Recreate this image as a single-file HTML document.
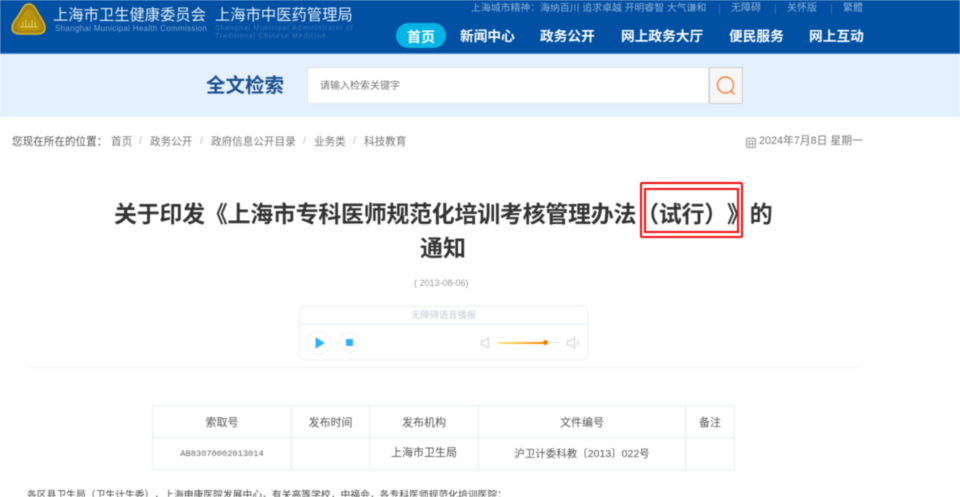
<!DOCTYPE html>
<html lang="zh">
<head>
<meta charset="utf-8">
<style>
html,body{margin:0;padding:0;background:#fff}
body{width:960px;height:497px;overflow:hidden;position:relative;font-family:"Liberation Sans","Noto Sans CJK SC",sans-serif;text-spacing-trim:space-all}
.a{position:absolute;white-space:nowrap;line-height:1}
#wrap{position:absolute;left:0;top:0;width:960px;height:497px;overflow:hidden;filter:blur(.5px)}
.nav{top:30px;font-size:14px;font-weight:700;color:#fff}
.top{top:4px;font-size:10px;color:#8fb2d8}
.bc{top:137px;font-size:10.6px;color:#777}
.sl{top:137px;font-size:10px;color:#bbb}
td{border:1px solid #e8ecf0;text-align:center;font-size:11px;color:#555;padding:0}
table{border-collapse:collapse;position:absolute;left:152px;top:405px;width:582px;height:65px;table-layout:fixed}
</style>
</head>
<body>
<div id="wrap">
<div class="a" style="left:0;top:0;width:960px;height:53px;background:#0050a3;border-bottom:1px solid #4d86c4"></div>
<svg class="a" style="left:11px;top:2px" width="36" height="33" viewBox="0 0 36 33">
<path d="M18 2C22 2 24 5 27 11C30 16 34 21 34 26C34 31 30 32 26 32H10C6 32 1 31 1 26C1 21 6 16 9 11C12 5 14 2 18 2Z" fill="#a88312" stroke="#d8bb28" stroke-width="1.5"/>
<path d="M18 7C21 7 22 10 24 13C26 17 30 21 30 25C30 28 26 29 24 29H12C10 29 6 28 6 25C6 21 10 17 12 13C14 10 15 7 18 7Z" fill="#b8940f"/>
<path d="M9 25H27M12 25V20M15 25V18M18 25V21M21 25V18M24 25V20" stroke="#e0cf60" stroke-width="1" fill="none"/>
</svg>
<div class="a" style="left:53px;top:8px;font-size:15.3px;color:#e6eef8">上海市卫生健康委员会</div>
<div class="a" style="left:55px;top:25px;font-size:8px;color:#7ea5d2;letter-spacing:.3px">Shanghai Municipal Health Commission</div>
<div class="a" style="left:215px;top:8px;font-size:15.3px;color:#e6eef8">上海市中医药管理局</div>
<div class="a" style="left:215px;top:25px;font-size:7px;color:#3f78b8;line-height:8px;letter-spacing:.76px;white-space:normal;width:160px">Shanghai Municipal Administrator of<br>Traditional Chinese Medicine</div>

<div class="a top" style="left:471px;font-size:9.9px">上海城市精神：海纳百川 追求卓越 开明睿智 大气谦和</div>
<div class="a" style="left:719px;top:4px;width:1px;height:10px;background:#3a72b3"></div>
<div class="a top" style="left:731px">无障碍</div>
<div class="a" style="left:775px;top:4px;width:1px;height:10px;background:#3a72b3"></div>
<div class="a top" style="left:787px">关怀版</div>
<div class="a" style="left:831px;top:4px;width:1px;height:10px;background:#3a72b3"></div>
<div class="a top" style="left:843px">繁體</div>

<div class="a" style="left:396px;top:23px;width:50px;height:25px;border-radius:13px;background:#05b4e6"></div>
<div class="a nav" style="left:407px">首页</div>
<div class="a nav" style="left:460px;font-size:13.7px">新闻中心</div>
<div class="a nav" style="left:540px;font-size:13.7px">政务公开</div>
<div class="a nav" style="left:621px;font-size:13.7px">网上政务大厅</div>
<div class="a nav" style="left:729px;font-size:13.7px">便民服务</div>
<div class="a nav" style="left:809px;font-size:13.7px">网上互动</div>

<div class="a" style="left:0;top:54px;width:960px;height:63px;background:#e4f1fc"></div>
<div class="a" style="left:206px;top:77px;font-size:19.5px;font-weight:700;color:#1b4f92">全文检索</div>
<div class="a" style="left:307px;top:67px;width:402px;height:37px;background:#fff;border:1px solid #d6e6f6;box-sizing:border-box"></div>
<div class="a" style="left:320px;top:82px;font-size:10px;color:#777">请输入检索关键字</div>
<div class="a" style="left:709px;top:67px;width:34px;height:37px;background:#f6f6f6;border:1px solid #ccc;box-sizing:border-box"></div>
<svg class="a" style="left:714px;top:74px" width="24" height="24" viewBox="0 0 24 24"><circle cx="11.5" cy="11" r="8" fill="none" stroke="#f57f3e" stroke-width="1.4"/><path d="M17 17L20.5 20.5" stroke="#f57f3e" stroke-width="1.5" fill="none"/></svg>

<div class="a bc" style="left:12px;color:#555">您现在所在的位置：</div>
<div class="a bc" style="left:111px">首页</div>
<div class="a sl" style="left:139px">/</div>
<div class="a bc" style="left:150px">政务公开</div>
<div class="a sl" style="left:200px">/</div>
<div class="a bc" style="left:211px">政府信息公开目录</div>
<div class="a sl" style="left:303px">/</div>
<div class="a bc" style="left:314px">业务类</div>
<div class="a sl" style="left:353px">/</div>
<div class="a bc" style="left:364px">科技教育</div>

<svg class="a" style="left:746px;top:137px" width="10" height="11" viewBox="0 0 10 11"><rect x=".5" y="1.5" width="9" height="9" rx="1" fill="none" stroke="#999"/><path d="M0 4H10M3.5 4V10M6.5 4V10M0 7H10M3 0V2M7 0V2" stroke="#999" stroke-width=".8"/></svg>
<div class="a" style="left:759px;top:136px;font-size:10.8px;color:#777">2024年7月8日 星期一</div>

<div class="a" style="left:114px;top:203px;font-size:23px;font-weight:700;color:#333;letter-spacing:-.3px;text-spacing-trim:space-all">关于印发《上海市专科医师规范化培训考核管理办法（试行）》的</div>
<div class="a" style="left:420px;top:237px;font-size:23px;font-weight:700;color:#333">通知</div>
<div class="a" style="left:640px;top:182px;width:103px;height:56px;border:2px solid #f40c0c;border-radius:2px;box-sizing:border-box"></div>
<div class="a" style="left:644px;top:188px;width:95px;height:45px;border:2px solid #f40c0c;box-sizing:border-box"></div>

<div class="a" style="left:414px;top:279px;font-size:9px;color:#999">( 2013-08-06)</div>

<div class="a" style="left:299px;top:306px;width:289px;height:54px;border:1px solid #eef1f5;border-radius:6px;box-sizing:border-box;box-shadow:0 0 2px #f0f2f6"></div>
<div class="a" style="left:299px;top:324px;width:289px;height:1px;background:#e2ecf6"></div>
<div class="a" style="left:411px;top:311px;font-size:9.3px;color:#c8cbd8">无障碍语音播报</div>
<div class="a" style="left:307px;top:331px;width:24px;height:24px;border:1px solid #edf0f5;border-radius:50%;box-sizing:border-box"></div>
<div class="a" style="left:339px;top:332px;width:21px;height:21px;border:1px solid #edf0f5;border-radius:50%;box-sizing:border-box"></div>
<svg class="a" style="left:315px;top:337px" width="10" height="12"><path d="M1 1L9 6L1 11Z" fill="#2db3fb" stroke="#2db3fb" stroke-linejoin="round"/></svg>
<div class="a" style="left:346px;top:339px;width:7px;height:7px;background:#2db3fb;border-radius:1px"></div>
<svg class="a" style="left:481px;top:337px" width="9" height="12"><path d="M.5 4H3L7.5 1V11L3 8H.5Z" fill="none" stroke="#ccd0d6"/></svg>
<div class="a" style="left:498px;top:342px;width:62px;height:1px;background:#e2e4e8"></div>
<div class="a" style="left:498px;top:342px;width:47px;height:1.5px;background:linear-gradient(90deg,#ffe27a,#ff8a00)"></div>
<div class="a" style="left:543px;top:340px;width:5px;height:5px;border-radius:50%;background:#f57c00"></div>
<svg class="a" style="left:567px;top:337px" width="13" height="12"><path d="M.5 4H3L7.5 1V11L3 8H.5Z" fill="none" stroke="#ccd0d6"/><path d="M9.5 4Q11 6 9.5 8M11 3Q13 6 11 9" fill="none" stroke="#dde0e4"/></svg>
<div class="a" style="left:28px;top:367px;width:832px;height:1px;background:#f1f2f4"></div>

<table>
<colgroup><col style="width:139px"><col style="width:78px"><col style="width:109px"><col style="width:207px"><col style="width:49px"></colgroup>
<tr style="height:32px"><td>索取号</td><td>发布时间</td><td>发布机构</td><td>文件编号</td><td>备注</td></tr>
<tr style="height:32px"><td style="font-family:'Liberation Mono',monospace;font-size:8.7px;color:#666">AB83070002013014</td><td></td><td style="line-height:11px">上海市卫生局</td><td style="font-size:10.5px">沪卫计委科教〔2013〕022号</td><td></td></tr>
</table>

<div class="a" style="left:27px;top:491px;font-size:9.8px;color:#444">各区县卫生局（卫生计生委），上海申康医院发展中心，有关高等学校，中福会，各专科医师规范化培训医院：</div>
</div>
</body>
</html>
